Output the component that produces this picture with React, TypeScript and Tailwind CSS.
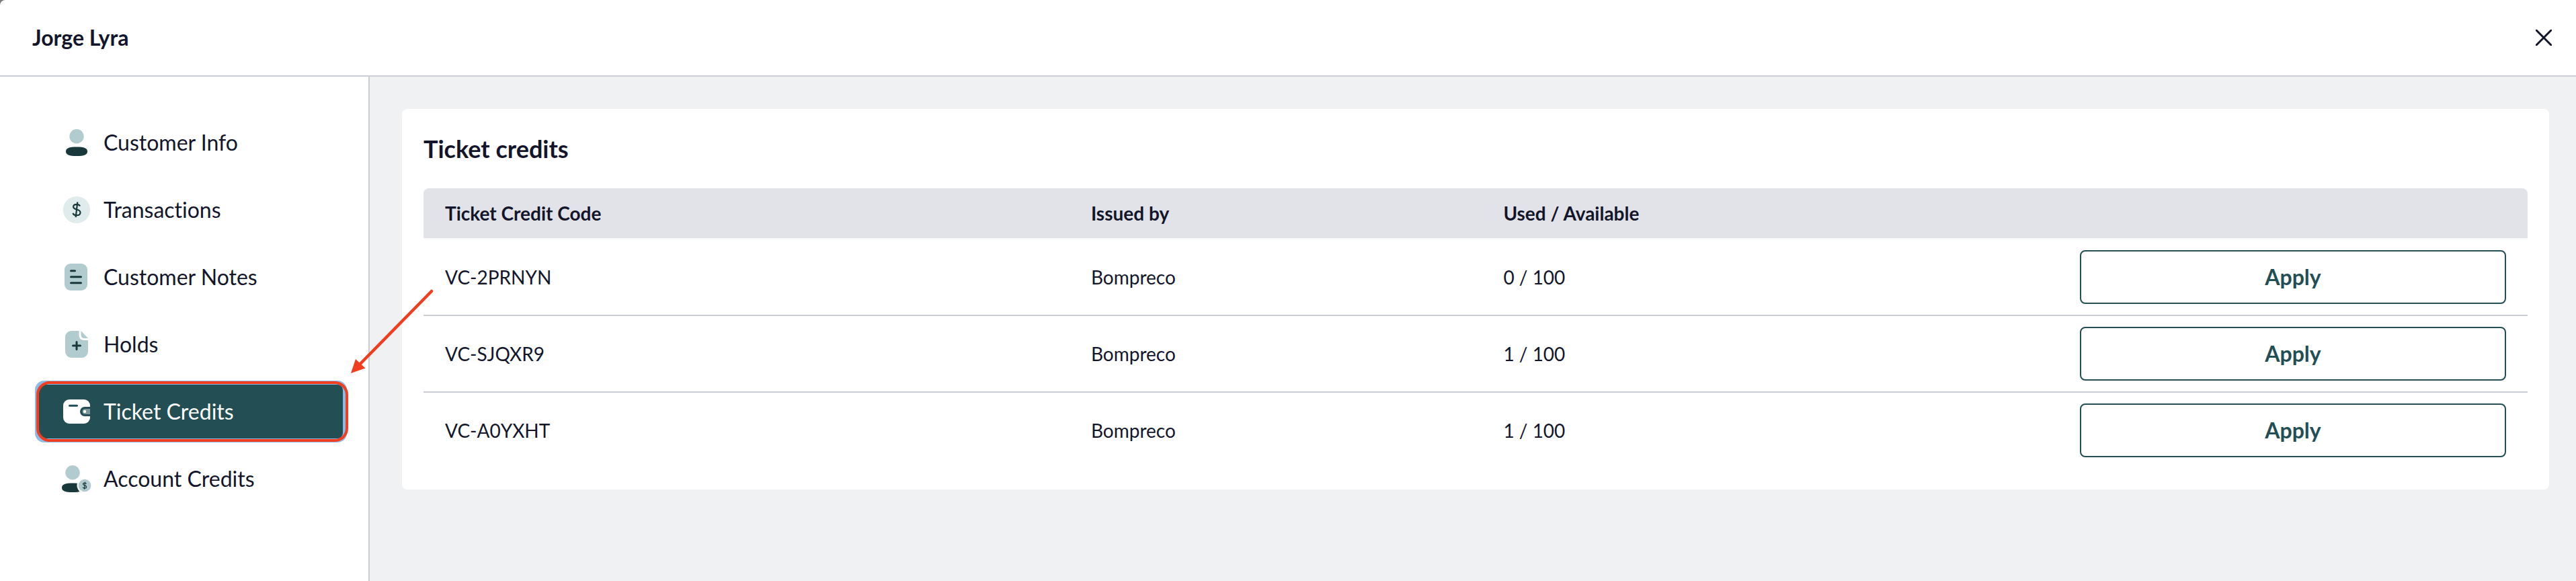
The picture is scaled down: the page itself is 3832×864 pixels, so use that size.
import type { ReactNode } from 'react';

const credits = [
  { code: 'VC-2PRNYN', issuedBy: 'Bompreco', used: 0, available: 100 },
  { code: 'VC-SJQXR9', issuedBy: 'Bompreco', used: 1, available: 100 },
  { code: 'VC-A0YXHT', issuedBy: 'Bompreco', used: 1, available: 100 },
];

function CustomerIcon() {
  return (
    <svg viewBox="0 0 40 40" className="size-10 shrink-0" aria-hidden="true">
      <circle cx="20" cy="10.7" r="10.7" fill="#b2cbcf" />
      <path d="M4 33.2c0-5 5-6.7 16-6.7s16 1.7 16 6.7-5 6.8-16 6.8-16-1.8-16-6.8Z" fill="#19383b" />
    </svg>
  );
}

function TransactionsIcon() {
  return (
    <svg viewBox="0 0 40 40" className="size-10 shrink-0" aria-hidden="true">
      <circle cx="20" cy="20" r="20" fill="#e0ebeb" />
      <path
        d="M25 14.5c-.8-1.800-2.400-2.700-5-2.700-3 0-4.900 1.400-4.900 3.700 0 5.400 10.400 2.700 10.400 8.400 0 2.700-2.200 4.300-5.400 4.300-2.900 0-4.900-1.200-5.700-3.200M21.300 8.500 18.700 31"
        fill="none"
        stroke="#19383b"
        strokeWidth="2.2"
      />
    </svg>
  );
}

function NotesIcon() {
  return (
    <svg viewBox="0 0 40 40" className="size-10 shrink-0" aria-hidden="true">
      <rect x="2" width="34" height="40" rx="9" fill="#b2cbcf" />
      <path d="M11.5 10.8h6M11.5 19.8h15M11.5 28.8h15" stroke="#19383b" strokeWidth="3" strokeLinecap="round" />
    </svg>
  );
}

function HoldsIcon() {
  return (
    <svg viewBox="0 0 40 40" className="size-10 shrink-0" aria-hidden="true">
      <path d="M12 0h11.500v6c0 5 3 8 8 8H37v17a9 9 0 0 1-9 9H12a9 9 0 0 1-9-9V9a9 9 0 0 1 9-9Z" fill="#b2cbcf" />
      <path d="M26.500 0 37 11h-6c-3 0-4.500-2-4.500-5V0Z" fill="#b2cbcf" />
      <path d="M14.500 22h11M20 16.500v11" stroke="#19383b" strokeWidth="3" strokeLinecap="round" />
    </svg>
  );
}

function TicketIcon() {
  return (
    <svg viewBox="0 0 40 40" className="size-10 shrink-0" aria-hidden="true">
      <rect y="2" width="40" height="36" rx="9" fill="#fff" />
      <path d="M9.5 11.2h11" stroke="#234f54" strokeWidth="3" strokeLinecap="round" />
      <path d="M40 13h-8a7 7 0 0 0 0 14h8Z" fill="#234f54" />
      <path d="M40 16h-7.500a4 4 0 0 0 0 8H40Z" fill="#7b9699" />
      <circle cx="32" cy="20" r="2.2" fill="#fff" />
    </svg>
  );
}

function AccountIcon() {
  return (
    <svg viewBox="0 0 40 40" className="size-10 shrink-0 overflow-visible" aria-hidden="true">
      <circle cx="14" cy="10.7" r="10.7" fill="#b2cbcf" />
      <path d="M-2 33.200c0-5 5-6.700 16-6.700s16 1.700 16 6.700-5 6.800-16 6.800-16-1.800-16-6.800Z" fill="#19383b" />
      <circle cx="32" cy="30" r="11.5" fill="#fff" />
      <circle cx="32" cy="30" r="9.3" fill="#b2cbcf" />
      <path
        d="M34.500 27.500c-.4-.9-1.200-1.300-2.500-1.300-1.500 0-2.400.7-2.400 1.800 0 2.600 5 1.300 5 4 0 1.300-1 2.100-2.600 2.100-1.400 0-2.300-.6-2.700-1.600M32.600 24.600 31.400 35.600"
        fill="none"
        stroke="#19383b"
        strokeWidth="1.2"
      />
    </svg>
  );
}

const navItems: { label: string; icon: ReactNode; active?: boolean }[] = [
  { label: 'Customer Info', icon: <CustomerIcon /> },
  { label: 'Transactions', icon: <TransactionsIcon /> },
  { label: 'Customer Notes', icon: <NotesIcon /> },
  { label: 'Holds', icon: <HoldsIcon /> },
  { label: 'Ticket Credits', icon: <TicketIcon />, active: true },
  { label: 'Account Credits', icon: <AccountIcon /> },
];

// Red frame and arrow pointing out the open section
function Callout() {
  return (
    <>
      <span className="pointer-events-none absolute -top-[5px] -right-2 -bottom-[5px] -left-1 rounded-[20px] border-4 border-[#f03e1e]" />
      <svg
        viewBox="0 0 124 126"
        className="pointer-events-none absolute bottom-24 left-full z-10 ml-3 h-[126px] w-[124px] max-w-none"
        aria-hidden="true"
      >
        <path d="M120 3 12 113" stroke="#f03e1e" strokeWidth="4.5" strokeLinecap="round" />
        <path d="M0 125 7 104l14.500 13.600Z" fill="#f03e1e" />
      </svg>
    </>
  );
}

function Sidebar() {
  return (
    <nav className="w-[550px] shrink-0 border-r-2 border-[#cbcdd5] pt-[58px] pr-[38px] pl-[58px]">
      <ul className="flex flex-col gap-5">
        {navItems.map((item) => (
          <li key={item.label} className="relative">
            <a
              href="#"
              aria-current={item.active ? 'page' : undefined}
              className={
                item.active
                  ? 'flex h-20 items-center gap-5 rounded-lg bg-[#234f54] px-9 text-[32px] text-white ring-6 ring-[#8fb9e6]'
                  : 'flex h-20 items-center gap-5 rounded-lg px-9 text-[32px]'
              }
            >
              {item.icon}
              {item.label}
            </a>
            {item.active && <Callout />}
          </li>
        ))}
      </ul>
    </nav>
  );
}

function CreditsTable() {
  return (
    <table className="w-full table-fixed border-separate border-spacing-0 text-left text-[28px]">
      <colgroup>
        <col className="w-[30.7%]" />
        <col className="w-[19.6%]" />
        <col className="w-[27.4%]" />
        <col className="w-[22.3%]" />
      </colgroup>
      <thead>
        <tr className="h-[76px] [&>th]:border-b-2 [&>th]:border-[#f8f9fa] [&>th]:bg-[#e2e3e8] [&>th]:bg-clip-padding [&>th]:px-8">
          <th className="rounded-tl-lg font-bold">Ticket Credit Code</th>
          <th className="font-bold">Issued by</th>
          <th className="font-bold">Used / Available</th>
          <th className="rounded-tr-lg" aria-label="Actions" />
        </tr>
      </thead>
      <tbody>
        {credits.map((credit) => (
          <tr key={credit.code} className="[&>td]:border-b-2 [&>td]:border-[#cbcdd5] [&>td]:px-8 [&>td]:py-4 last:[&>td]:border-b-0">
            <td>{credit.code}</td>
            <td>{credit.issuedBy}</td>
            <td>
              {credit.used} / {credit.available}
            </td>
            <td>
              <button
                type="button"
                className="block h-20 w-full rounded-lg border-2 border-[#234f54] text-[32px] font-bold text-[#234f54]"
              >
                Apply
              </button>
            </td>
          </tr>
        ))}
      </tbody>
    </table>
  );
}

export default function App() {
  return (
    <div className="min-h-screen bg-[#7a7a7a]">
      <div className="flex min-h-screen flex-col rounded-tl-lg bg-white font-['Lato',sans-serif] text-[#13162b] [font-variant-ligatures:none]">
        <header className="flex h-[114px] items-center justify-between border-b-2 border-[#cbcdd5] pr-9 pl-12">
          <h1 className="text-[32px] font-bold">Jorge Lyra</h1>
          <button type="button" aria-label="Close">
            <svg viewBox="0 0 24 24" className="size-6" aria-hidden="true">
              <path d="m1 1 22 22M23 1 1 23" stroke="#13162b" strokeWidth="3" strokeLinecap="round" />
            </svg>
          </button>
        </header>
        <div className="flex grow">
          <Sidebar />
          <main className="grow bg-[#f0f1f3] pt-12 pr-10 pl-12">
            <section className="rounded-lg bg-white p-8">
              <h2 className="mb-8 text-[36px] leading-[54px] font-bold">Ticket credits</h2>
              <CreditsTable />
            </section>
          </main>
        </div>
      </div>
    </div>
  );
}
